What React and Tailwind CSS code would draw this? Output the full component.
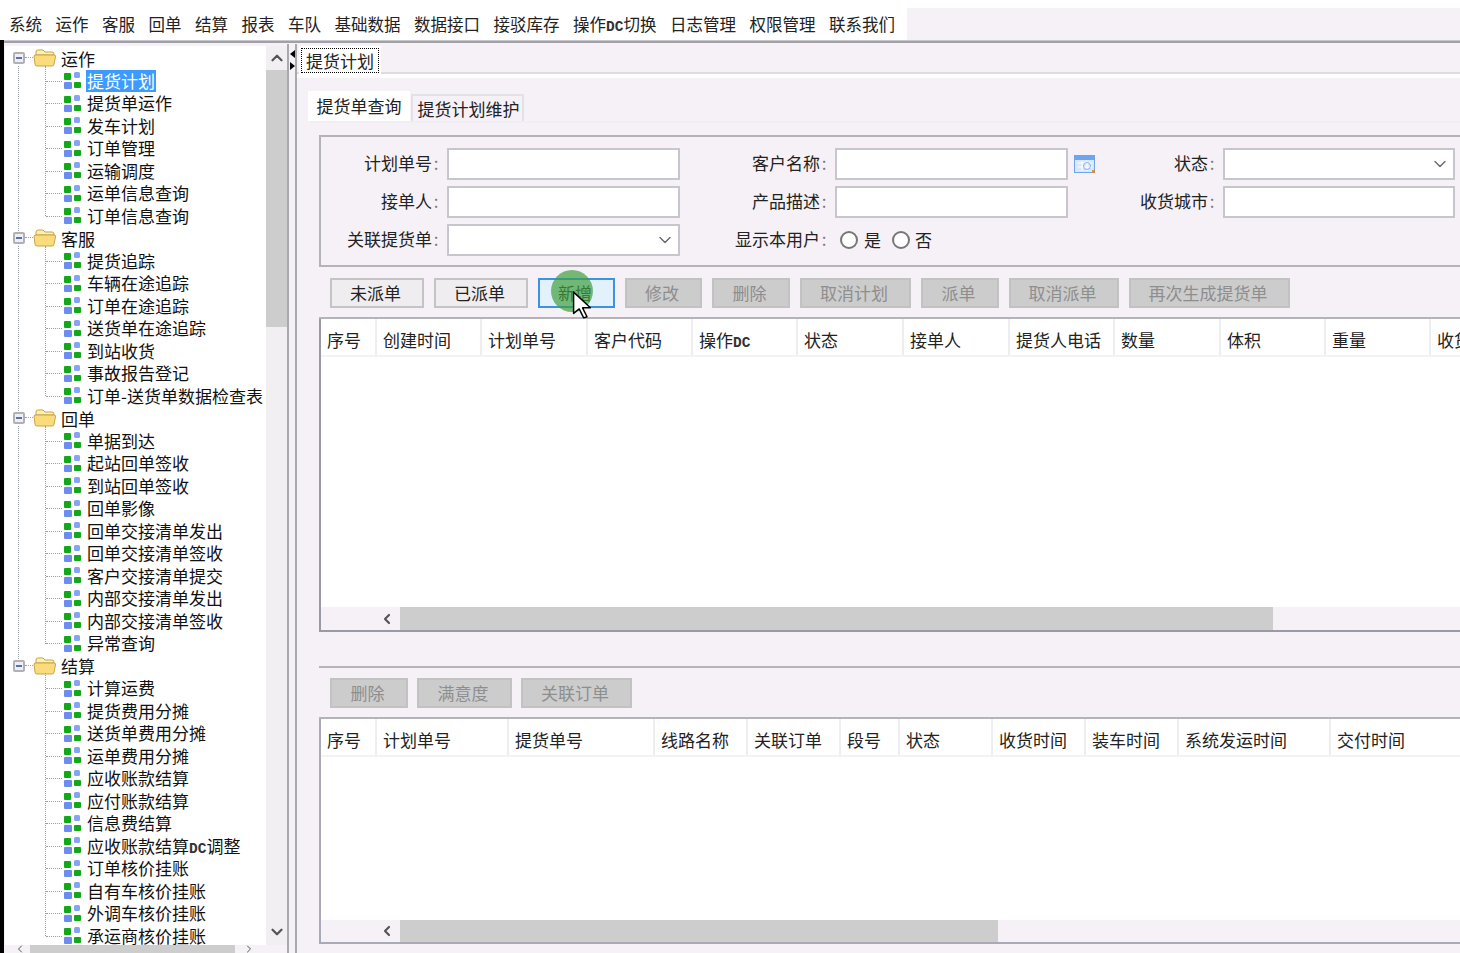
import React from "react";
import { ChevronDown, ChevronUp, ChevronLeft, ChevronRight } from "lucide-react";

const menuItems = ["系统", "运作", "客服", "回单", "结算", "报表", "车队", "基础数据", "数据接口", "接驳库存", "操作DC切换", "日志管理", "权限管理", "联系我们"];

const tree = [
  { label: "运作", items: ["提货计划", "提货单运作", "发车计划", "订单管理", "运输调度", "运单信息查询", "订单信息查询"] },
  { label: "客服", items: ["提货追踪", "车辆在途追踪", "订单在途追踪", "送货单在途追踪", "到站收货", "事故报告登记", "订单-送货单数据检查表"] },
  { label: "回单", items: ["单据到达", "起站回单签收", "到站回单签收", "回单影像", "回单交接清单发出", "回单交接清单签收", "客户交接清单提交", "内部交接清单发出", "内部交接清单签收", "异常查询"] },
  { label: "结算", items: ["计算运费", "提货费用分摊", "送货单费用分摊", "运单费用分摊", "应收账款结算", "应付账款结算", "信息费结算", "应收账款结算DC调整", "订单核价挂账", "自有车核价挂账", "外调车核价挂账", "承运商核价挂账"] },
];

const topButtons = [
  { label: "未派单", w: "w-[94px]", on: true },
  { label: "已派单", w: "w-[94px]", on: true },
  { label: "新增", w: "w-[77px]", active: true },
  { label: "修改", w: "w-[77px]" },
  { label: "删除", w: "w-[78px]" },
  { label: "取消计划", w: "w-[111px]" },
  { label: "派单", w: "w-[78px]" },
  { label: "取消派单", w: "w-[110px]" },
  { label: "再次生成提货单", w: "w-[161px]" },
];

const lowerButtons = [
  { label: "删除", w: "w-[78px]" },
  { label: "满意度", w: "w-[95px]" },
  { label: "关联订单", w: "w-[111px]" },
];

const topCols = [
  ["序号", 56], ["创建时间", 105], ["计划单号", 106], ["客户代码", 105], ["操作DC", 105], ["状态", 106],
  ["接单人", 106], ["提货人电话", 105], ["数量", 106], ["体积", 105], ["重量", 105], ["收货", 105],
];

const lowerCols = [
  ["序号", 56], ["计划单号", 132], ["提货单号", 146], ["线路名称", 93], ["关联订单", 93], ["段号", 59],
  ["状态", 93], ["收货时间", 93], ["装车时间", 93], ["系统发运时间", 152], ["交付时间", 140],
];

// the "DC" in the original is drawn in a narrow bitmap-like face
const Txt = ({ text }) => {
  if (!text.includes("DC")) return text;
  const [a, b] = text.split("DC");
  return (
    <>
      {a}
      <span className="text-[14.5px] leading-none font-bold text-[#333]" style={{ fontFamily: '"Liberation Mono", monospace' }}>DC</span>
      {b}
    </>
  );
};

const FolderIcon = () => (
  <svg width="24" height="18" viewBox="0 0 24 18" className="shrink-0">
    <path d="M3 6 L3 3 Q3 1 5 1 L10 1 L12 3 L19 3 Q21 3 21 5 L21 6 Z" fill="#fff0b0" stroke="#c8a448" />
    <path d="M1 7 Q1 6 3 6 L21 6 Q23 6 22.5 8 L21 15 Q21 17 19 17 L4 17 Q2 17 2 15 Z" fill="#fbdc7c" stroke="#c8a448" />
  </svg>
);

const LeafIcon = () => (
  <svg width="17" height="17" viewBox="0 0 17 17" className="shrink-0">
    <rect x="0" y="1" width="7" height="7" rx="1" fill="#12a81a" />
    <rect x="10" y="0" width="6" height="6" rx="1.5" fill="#86a3f5" />
    <rect x="0" y="10" width="8" height="7" rx="1" fill="#6d8cf0" />
    <rect x="10" y="10" width="7" height="6" rx="1" fill="#12a81a" />
  </svg>
);

const TreeGroup = ({ group, last }) => (
  <div className="relative">
    {!last && <div className="absolute left-[13px] top-[19px] bottom-[-4px] border-l border-dotted border-gray-400"></div>}
    <div className="relative h-[22.5px] flex items-center">
      <div className="absolute left-[8px] top-[5px] w-[12px] h-[12px] border-2 border-[#b0b0b6] rounded-[2px] bg-[#eeeef4] flex items-center justify-center">
        <div className="w-[6px] h-[2px] bg-[#5a72a8]"></div>
      </div>
      <div className="absolute left-[20px] top-[10px] w-[8px] border-t border-dotted border-gray-400"></div>
      <div className="ml-[28px]"><FolderIcon /></div>
      <span className="ml-[4px] text-[17px] leading-none">{group.label}</span>
    </div>
    <div className="relative">
      <div className="absolute left-[40px] top-[-4px] bottom-[11px] border-l border-dotted border-gray-400"></div>
      {group.items.map((item) => (
        <div key={item} className="relative h-[22.5px] flex items-center">
          <div className="absolute left-[41px] top-[11px] w-[16px] border-t border-dotted border-gray-400"></div>
          <div className="ml-[59px]"><LeafIcon /></div>
          <span className={`ml-[5px] px-[1px] text-[17px] leading-[22px] whitespace-nowrap ${item === "提货计划" ? "bg-[#3b9bff] text-white" : ""}`}><Txt text={item} /></span>
        </div>
      ))}
    </div>
  </div>
);

const Label = ({ text, w }) => (
  <div className={`${w} shrink-0 pr-[7px] pb-[2px] text-right text-[17px] text-[#222] whitespace-nowrap`}>
    {text}<span className="inline-block w-[8px] text-center text-[#777]">:</span>
  </div>
);

const Field = ({ w = "w-[233px]", select }) => (
  <div className={`${w} h-[32px] shrink-0 border-2 border-[#c6c6cc] bg-white flex items-center justify-end pr-[3px]`}>
    {select && <ChevronDown size={20} strokeWidth={1.6} className="text-[#666]" />}
  </div>
);

const Radio = ({ className }) => (
  <div className={`w-[18px] h-[18px] rounded-full border-2 border-[#777] bg-white ${className}`}></div>
);

const ToolButton = ({ b }) => (
  <div
    className={`${b.w} h-[30px] shrink-0 flex items-center justify-center pr-[3px] text-[17px] border-2 ${
      b.active
        ? "bg-[#e3f1fd] border-[#3b93e6] text-[#222]"
        : b.on
          ? "bg-[#f0edf1] border-[#c4c4c4] text-[#222]"
          : "bg-[#cccccc] border-[#c2c2c2] text-[#8e8e8e]"
    }`}
  >
    {b.label}
  </div>
);

const HeaderRow = ({ cols }) => (
  <div className="h-[38px] bg-white flex border-b-2 border-[#f4f2f6]">
    {cols.map(([label, w]) => (
      <div key={label} style={{ width: w }} className="shrink-0 pl-[6px] pt-[5px] border-r-2 border-[#eeeef0] flex items-center text-[17px] text-[#222] whitespace-nowrap overflow-hidden">
        <span><Txt text={label} /></span>
      </div>
    ))}
  </div>
);

const HScroll = ({ thumb, h }) => (
  <div className={`${h} flex items-center`}>
    <div className="w-[79px] flex justify-end pr-[5px]">
      <ChevronLeft size={16} strokeWidth={3.2} className="text-[#555]" />
    </div>
    <div style={{ width: thumb }} className="h-full bg-[#cdcdcd]"></div>
  </div>
);

export default function App() {
  return (
    <div className="relative w-[1460px] h-[953px] overflow-hidden bg-[#f5f1f6] text-[#111]" style={{ fontFamily: '"Noto Sans CJK SC", "Liberation Sans", sans-serif' }}>
      <div className="h-[8px] bg-white"></div>
      <div className="h-[32px] flex">
        <div className="w-[907px] bg-white pl-[9px] flex items-center gap-[13.5px] text-[16.5px] text-[#222]">
          {menuItems.map((m) => <span key={m} className="whitespace-nowrap"><Txt text={m} /></span>)}
        </div>
      </div>
      <div className="h-[4px] flex">
        <div className="w-[4px] bg-black"></div>
        <div className="flex-1">
          <div className="h-px bg-[#c8c8cc]"></div>
          <div className="h-[2px] bg-[#a0a0a6]"></div>
        </div>
      </div>

      <div className="flex h-[909px]">
        <div className="w-[4px] bg-black shrink-0"></div>
        {/* left tree */}
        <div className="w-[283px] shrink-0 flex flex-col pt-[2px]">
          <div className="flex flex-1 min-h-0">
            <div className="w-[261px] ml-[1px] overflow-hidden bg-white pt-px">
              {tree.map((g, i) => <TreeGroup key={g.label} group={g} last={i === tree.length - 1} />)}
            </div>
            <div className="w-[21px] flex flex-col bg-[#f2eff3]">
              <div className="h-[24px] flex items-center justify-center"><ChevronUp size={18} strokeWidth={3} className="text-[#555]" /></div>
              <div className="h-[257px] bg-[#cdcdcd]"></div>
              <div className="flex-1"></div>
              <div className="h-[26px] flex items-center justify-center"><ChevronDown size={18} strokeWidth={3} className="text-[#555]" /></div>
            </div>
          </div>
          <div className="h-[8px] flex items-center">
            <ChevronLeft size={12} className="ml-[10px] text-[#555]" />
            <div className="ml-[4px] w-[205px] h-[8px] bg-[#cdcdcd]"></div>
            <ChevronRight size={12} className="ml-[8px] text-[#555]" />
          </div>
        </div>

        {/* splitter */}
        <div className="w-[10px] shrink-0 border-l-2 border-r-2 border-[#a9a9ad] flex flex-col items-center pt-[6px] gap-[4px]">
          <div className="w-0 h-0 border-y-[4px] border-y-transparent border-r-[5px] border-r-black"></div>
          <div className="w-0 h-0 border-y-[4px] border-y-transparent border-l-[5px] border-l-black"></div>
        </div>

        {/* right */}
        <div className="flex-1 min-w-0">
          <div className="h-[30px] pt-[2px] pl-[2px] border-b-2 border-[#dddde0]">
            <div className="w-[82px] h-[29px] bg-white p-[2px]">
              <div className="h-full border border-dotted border-black flex items-center justify-center text-[17px] text-[#222]">提货计划</div>
            </div>
          </div>
          <div className="h-[4px] bg-white"></div>
          <div className="h-[13px]"></div>

          <div className="pl-[11px] flex items-end h-[30px]">
            <div className="w-[102px] h-[30px] bg-white flex items-center justify-center text-[17px] text-[#222]">提货单查询</div>
            <div className="w-[113px] h-[27px] ml-[1px] pl-[2px] border-2 border-b-0 border-[#e2e2e6] flex items-center justify-center text-[17px] text-[#222]">提货计划维护</div>
          </div>
          <div className="h-[14px] ml-[13px] border-t-2 border-[#efeef2]"></div>

          {/* search form */}
          <div className="ml-[22px] h-[132px] border-2 border-r-0 border-[#b4b4b8] pt-[11px] pl-[2px] flex flex-col gap-[6px]">
            <div className="flex items-center">
              <Label w="w-[124px]" text="计划单号" />
              <Field />
              <Label w="w-[155px]" text="客户名称" />
              <Field />
              <svg width="22" height="19" viewBox="0 0 22 19" className="ml-[6px] shrink-0">
                <rect x="0.5" y="0.5" width="20" height="17" fill="#dbe8fb" stroke="#6ea5ee" />
                <rect x="1" y="1" width="19" height="4" fill="#6ea5ee" />
                <path d="M4 8h14M4 12h14M8 6v10M13 6v10" stroke="#fff" />
                <circle cx="13" cy="11" r="3.5" fill="none" stroke="#8ab4ec" />
                <rect x="18" y="15" width="3" height="3" fill="#c9924f" />
              </svg>
              <Label w="w-[127px]" text="状态" />
              <Field select w="w-[232px]" />
            </div>
            <div className="flex items-center">
              <Label w="w-[124px]" text="接单人" />
              <Field />
              <Label w="w-[155px]" text="产品描述" />
              <Field />
              <div className="w-[28px] shrink-0"></div>
              <Label w="w-[127px]" text="收货城市" />
              <Field w="w-[232px]" />
            </div>
            <div className="flex items-center">
              <Label w="w-[124px]" text="关联提货单" />
              <Field select />
              <Label w="w-[155px]" text="显示本用户" />
              <div className="flex items-center pb-[1px] text-[17px] text-[#222]">
                <Radio className="ml-[5px] mr-[6px]" />是
                <Radio className="ml-[11px] mr-[5px]" />否
              </div>
            </div>
          </div>

          {/* top buttons */}
          <div className="ml-[22px] h-[52px] flex items-start gap-[10px] pt-[11px] pl-[11px] border-b-2 border-[#b4b4b8]">
            {topButtons.map((b) => <ToolButton key={b.label} b={b} />)}
          </div>

          {/* top table */}
          <div className="ml-[22px] h-[313px] border-2 border-r-0 border-t-0 border-[#9a9aa4]">
            <HeaderRow cols={topCols} />
            <div className="h-[250px] bg-white"></div>
            <HScroll thumb="873px" h="h-[23px]" />
          </div>

          <div className="h-[34px]"></div>

          {/* lower buttons */}
          <div className="ml-[22px] h-[53px] flex items-start gap-[9px] pt-[10px] pl-[11px] border-t-2 border-b-2 border-[#b4b4b8]">
            {lowerButtons.map((b) => <ToolButton key={b.label} b={b} />)}
          </div>

          {/* lower table */}
          <div className="ml-[22px] h-[225px] border-2 border-r-0 border-t-0 border-[#a9a9b8]">
            <HeaderRow cols={lowerCols} />
            <div className="h-[163px] bg-white"></div>
            <HScroll thumb="598px" h="h-[22px]" />
          </div>
        </div>
      </div>

      {/* click highlight and cursor */}
      <div className="absolute left-[551px] top-[270px] w-[42px] h-[42px] rounded-full bg-[#3f9e3f]/70"></div>
      <svg width="20" height="28" viewBox="0 0 17 25" className="absolute left-[572px] top-[291px]">
        <path d="M1 1 L1 20 L6 16 L10 24 L13 23 L9 15 L16 15 Z" fill="#fff" stroke="#000" strokeWidth="1.3" strokeLinejoin="round" />
      </svg>
    </div>
  );
}
